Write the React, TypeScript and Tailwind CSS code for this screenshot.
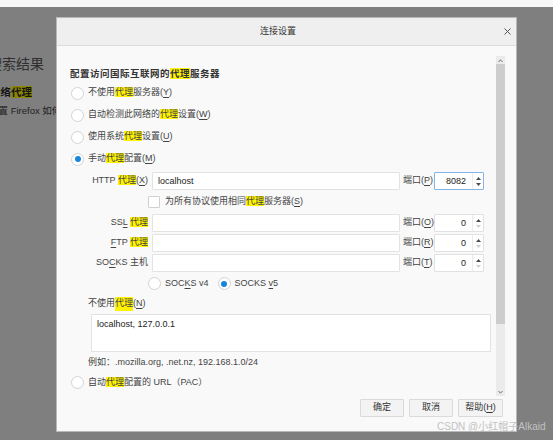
import React from "react";

const HL = ({ children }: { children: React.ReactNode }) => (
  <span className="bg-[#fff200]">{children}</span>
);

const U = ({ children }: { children: React.ReactNode }) => (
  <span className="underline underline-offset-[1.5px] decoration-[0.8px]">{children}</span>
);

function Radio({ checked }: { checked?: boolean }) {
  return (
    <span className="w-[13px] h-[13px] rounded-full border border-[#d3d3d3] bg-white flex items-center justify-center shrink-0">
      {checked && <span className="w-[6px] h-[6px] rounded-full bg-[#1686dc]" />}
    </span>
  );
}

function Arrow({ up, dim }: { up?: boolean; dim?: boolean }) {
  return (
    <svg width="5" height="3" viewBox="0 0 5 3" className="block">
      <path d={up ? "M0 3 L2.5 0 L5 3 Z" : "M0 0 L2.5 3 L5 0 Z"} fill={dim ? "#cfcfcf" : "#4a4a4a"} />
    </svg>
  );
}

function Port({ k, value, focused }: { k: string; value: string; focused?: boolean }) {
  return (
    <>
      <span className="w-[31px] ml-[3px] text-[#444] whitespace-nowrap">
        端口(<U>{k}</U>)
      </span>
      <div
        className={`w-[50px] h-[18px] flex bg-white border rounded-[1px] ${
          focused ? "border-[#82b4ea]" : "border-[#e1e1e1]"
        }`}
      >
        <span className="flex-1 text-right pr-[6px] leading-[16px] text-[#222]">{value}</span>
        <span className="w-[11px] flex flex-col items-center justify-center gap-[3px] border-l border-[#ececec]">
          <Arrow up />
          <Arrow dim={!focused} />
        </span>
      </div>
    </>
  );
}

function ProxyRow({
  label,
  value,
  k,
  port,
  focused,
  h,
}: {
  label: React.ReactNode;
  value?: string;
  k: string;
  port: string;
  focused?: boolean;
  h: string;
}) {
  return (
    <div className={`flex items-center ${h}`}>
      <span className="w-[60px] ml-[18px] text-right text-[#444] whitespace-nowrap">{label}</span>
      <div className="w-[248px] h-[18px] ml-[4px] bg-white border border-[#e3e3e3] rounded-[1px] pl-[5px] leading-[16px] text-[#222]">
        {value}
      </div>
      <Port k={k} value={port} focused={focused} />
    </div>
  );
}

export default function App() {
  return (
    <div className="relative w-[553px] h-[440px] overflow-hidden bg-[#7f7f7f] font-['Liberation_Sans','Noto_Sans_CJK_SC',sans-serif]">
      {/* page behind the overlay */}
      <div className="h-[7px] bg-[#f7f7f7]" />
      <div className="pt-[47px] whitespace-nowrap">
        <div className="text-[14px] leading-[20px] -ml-[12px] text-[#2f2f2f]">搜索结果</div>
        <div className="mt-[10px] text-[10.5px] leading-[16px] -ml-[10px] font-bold text-[#141414]">
          网络<span className="bg-[#8c8700]">代理</span>
        </div>
        <div className="mt-[4px] text-[9.5px] leading-[14px] -ml-[11px] text-[#1e1e1e]">
          设置 Firefox 如何连接到互联网
        </div>
      </div>

      {/* dialog */}
      <div className="absolute left-[56px] top-[17px] w-[461px] h-[415px] bg-[#f9f9f9] border border-[#b8b8b8] flex flex-col text-[9px] text-[#444]">
        <div className="h-[28px] shrink-0 flex items-center bg-[#efefef] border-b border-[#dcdcdc]">
          <span className="flex-1 text-center text-[9px] text-[#333]">连接设置</span>
          <span className="w-[16px] mr-[1px] flex items-center justify-center">
            <svg width="7" height="7" viewBox="0 0 7 7">
              <path d="M0.5 0.5 L6.5 6.5 M6.5 0.5 L0.5 6.5" stroke="#555" strokeWidth="1" />
            </svg>
          </span>
        </div>

        <div className="h-[351px] flex shrink-0">
          <div className="flex-1 overflow-hidden pl-[13px] pr-[5px] pt-[19px]">
            <div className="h-[17px] leading-[17px] text-[9.5px] tracking-[0.5px] font-bold text-[#333] whitespace-nowrap">
              配置访问国际互联网的<HL>代理</HL>服务器
            </div>
            {[
              <>不使用<HL>代理</HL>服务器(<U>Y</U>)</>,
              <>自动检测此网络的<HL>代理</HL>设置(<U>W</U>)</>,
              <>使用系统<HL>代理</HL>设置(<U>U</U>)</>,
              <>手动<HL>代理</HL>配置(<U>M</U>)</>,
            ].map((t, i) => (
              <div key={i} className="h-[22px] flex items-center">
                <span className="ml-[1px]">
                  <Radio checked={i === 3} />
                </span>
                <span className="ml-[4px] whitespace-nowrap">{t}</span>
              </div>
            ))}

            <ProxyRow
              h="h-[22px]"
              label={<>HTTP <HL>代理</HL>(<U>X</U>)</>}
              value="localhost"
              k="P"
              port="8082"
              focused
            />
            <div className="h-[20px] flex items-center">
              <span className="ml-[78px] w-[12px] h-[12px] bg-white border border-[#d0d0d0] rounded-[1px]" />
              <span className="ml-[5px] whitespace-nowrap">
                为所有协议使用相同<HL>代理</HL>服务器(<U>S</U>)
              </span>
            </div>
            <div className="mt-[1px]">
              <ProxyRow h="h-[20px]" label={<>SS<U>L</U> <HL>代理</HL></>} k="O" port="0" />
              <ProxyRow h="h-[20px]" label={<><U>F</U>TP <HL>代理</HL></>} k="R" port="0" />
              <ProxyRow h="h-[20px]" label={<>SO<U>C</U>KS 主机</>} k="T" port="0" />
            </div>
            <div className="h-[21px] flex items-center whitespace-nowrap">
              <span className="ml-[78px]">
                <Radio />
              </span>
              <span className="ml-[4px]">
                SOC<U>K</U>S v4
              </span>
              <span className="ml-[9px]">
                <Radio checked />
              </span>
              <span className="ml-[4px]">
                SOCKS <U>v</U>5
              </span>
            </div>
            <div className="h-[20px] flex items-center ml-[18px] whitespace-nowrap">
              不使用<HL>代理</HL>(<U>N</U>)
            </div>
            <div className="h-[38px] ml-[21px] bg-white border border-[#e3e3e3] pl-[5px] pt-[3px] leading-[13px] text-[#222]">
              localhost, 127.0.0.1
            </div>
            <div className="h-[21px] flex items-center ml-[18px] whitespace-nowrap">
              例如：.mozilla.org, .net.nz, 192.168.1.0/24
            </div>
            <div className="h-[19px] flex items-center whitespace-nowrap">
              <span className="ml-[1px]">
                <Radio />
              </span>
              <span className="ml-[4px]">
                自动<HL>代理</HL>配置的 URL（PAC）
              </span>
            </div>
            <div className="mt-[5px] flex ml-[21px] gap-[7px]">
              <div className="w-[334px] h-[18px] bg-white border border-[#e6e6e6]" />
              <div className="w-[58px] h-[18px] bg-[#f4f4f4] border border-[#e6e6e6]" />
            </div>
          </div>

          <div className="w-[9px] mr-[11px] mt-[10px] mb-[1px] bg-[#ebebeb] flex flex-col items-center">
            <div className="h-[8px] flex items-center justify-center">
              <svg width="5" height="3" viewBox="0 0 5 3">
                <path d="M0.5 3 L2.5 0.8 L4.5 3" fill="none" stroke="#666" strokeWidth="0.9" />
              </svg>
            </div>
            <div className="w-full h-[260px] bg-[#cdcdcd]" />
            <div className="flex-1" />
            <div className="h-[8px] flex items-center justify-center">
              <svg width="5" height="3" viewBox="0 0 5 3">
                <path d="M0.5 0 L2.5 2.2 L4.5 0" fill="none" stroke="#666" strokeWidth="0.9" />
              </svg>
            </div>
          </div>
        </div>

        <div className="flex-1 flex justify-end items-start pt-[2px] pr-[13px] gap-[5px]">
          {[
            <>确定</>,
            <>取消</>,
            <>帮助(<U>H</U>)</>,
          ].map((t, i) => (
            <div
              key={i}
              className={`h-[18px] ${i === 2 ? "w-[45px]" : "w-[44px]"} flex items-center justify-center bg-[#f3f3f3] border border-[#dadada] rounded-[1px] text-[#333]`}
            >
              {t}
            </div>
          ))}
        </div>
      </div>

      {/* watermark */}
      <div className="absolute left-[437px] top-[420px] text-[10px] leading-[14px] text-[#c2c2c2] whitespace-nowrap">
        CSDN @小红帽子Alkaid
      </div>
    </div>
  );
}
